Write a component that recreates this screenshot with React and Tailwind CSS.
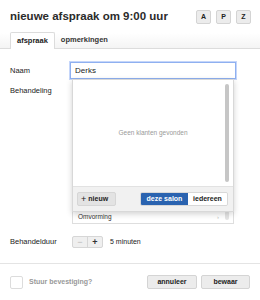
import React, { useState } from 'react';

const font = { fontFamily: '"Liberation Sans", Arial, sans-serif' };

function SmallKey({ children }) {
  return (
    <button className="w-[15px] h-[14px] rounded-[2px] border border-[#d4d4d4] bg-[#ececec] text-[7px] font-bold text-[#222] flex items-center justify-center leading-none">
      {children}
    </button>
  );
}

export default function App() {
  const [name, setName] = useState('Derks');
  const [duur, setDuur] = useState(5);
  const [scope, setScope] = useState('salon');

  return (
    <div className="w-[260px] h-[300px] bg-white text-[#222] overflow-hidden flex flex-col" style={font}>
      {/* header */}
      <div className="flex items-center justify-between pl-[10px] pr-[9px] pt-[9px] h-[24px]">
        <h1 className="text-[11.5px] font-bold leading-none text-[#2b2b2b]">nieuwe afspraak om 9:00 uur</h1>
        <div className="flex gap-[5px]">
          <SmallKey>A</SmallKey>
          <SmallKey>P</SmallKey>
          <SmallKey>Z</SmallKey>
        </div>
      </div>

      {/* tabs */}
      <div className="mt-[9px] flex items-end h-[16px] px-[10px] bg-gradient-to-b from-white to-[#f4f4f4] border-b border-[#dcdcdc]">
        <div className="h-[17px] -mb-px px-[6px] flex items-center bg-white border border-b-0 border-[#dcdcdc] rounded-t-[2px] text-[7.5px] font-bold">afspraak</div>
        <div className="h-[16px] px-[6px] flex items-center text-[7.5px] font-bold text-[#333]">opmerkingen</div>
      </div>

      {/* form */}
      <div className="flex flex-col px-[10px] pt-[13px]">
        <div className="flex items-center h-[17px]">
          <div className="w-[60px] text-[7.5px]">Naam</div>
          <div className="relative h-[17px]">
            <input
              value={name}
              onChange={e => setName(e.target.value)}
              className="block w-[166px] h-[17px] border border-[#8fb0f0] shadow-[0_0_0_1px_#c5d6fa] px-[4px] text-[8px] outline-none"
              style={font}
            />
            <div className="absolute left-[2px] top-[17px] w-[162px] h-[133px] bg-white border border-[#d8d8d8] shadow-[0_2px_6px_rgba(0,0,0,0.18)] z-10 flex flex-col">
              <div className="relative flex-1 flex items-center justify-center">
                <span className="text-[6.5px] text-[#999]">Geen klanten gevonden</span>
                <div className="absolute right-[4px] top-[4px] w-[4px] h-[98px] rounded-full bg-[#c6c6c6]"></div>
              </div>
              <div className="h-[25px] bg-[#f1f1f1] border-t border-[#e2e2e2] flex items-center justify-between pl-[4px] pr-[5px]">
                <button className="h-[14px] px-[3px] w-[39px] rounded-[2px] bg-[#e3e3e3] border border-[#d6d6d6] text-[7px] font-bold flex items-center gap-[2px]">
                  <span className="text-[9px] leading-none font-normal">+</span>nieuw
                </button>
                <div className="flex h-[14px] rounded-[2px] overflow-hidden border border-[#d8d8d8]">
                  <button
                    onClick={() => setScope('salon')}
                    className={scope === 'salon' ? 'w-[47px] bg-[#2a63b0] text-white text-[7px] font-bold' : 'w-[47px] bg-white text-[#222] text-[7px] font-bold'}
                  >
                    deze salon
                  </button>
                  <button
                    onClick={() => setScope('all')}
                    className={scope === 'all' ? 'w-[39px] bg-[#2a63b0] text-white text-[7px] font-bold' : 'w-[39px] bg-white text-[#222] text-[7px] font-bold'}
                  >
                    iedereen
                  </button>
                </div>
              </div>
            </div>
          </div>
        </div>

        <div className="flex items-start mt-[5px]">
          <div className="w-[60px] text-[7.5px] pt-[1px]">Behandeling</div>
          <div className="ml-[2px] w-[162px] h-[140px] border border-[#dedede] relative flex flex-col justify-end overflow-hidden">
            <div className="h-[12px] shrink-0 flex items-center justify-between pl-[5px] pr-[14px] text-[6.5px] text-[#333]">
              <span>Omvorming</span>
              <span className="text-[6px] text-[#bbb]">›</span>
            </div>
            <div className="absolute right-[4px] bottom-[3px] w-[4px] h-[9px] rounded-full bg-[#e4e4e4]"></div>
          </div>
        </div>

        <div className="flex items-center mt-[12px]">
          <div className="w-[62px] text-[7.5px]">Behandelduur</div>
          <div className="flex h-[12px] w-[31px] border border-[#d6d6d6] rounded-[2px] bg-[#efefef] text-[9px] leading-none">
            <button onClick={() => setDuur(Math.max(5, duur - 5))} className="flex-1 text-[#b8b8b8] border-r border-[#d6d6d6] flex items-center justify-center">−</button>
            <button onClick={() => setDuur(duur + 5)} className="flex-1 text-[#333] flex items-center justify-center font-bold">+</button>
          </div>
          <span className="ml-[7px] text-[7px]">{duur} minuten</span>
        </div>
      </div>

      <div className="mt-[15px] border-t border-[#e4e4e4]"></div>

      {/* footer */}
      <div className="flex items-center justify-between px-[10px] pt-[11px]">
        <label className="flex items-center gap-[6px]">
          <span className="w-[13px] h-[13px] border border-[#dcdcdc] rounded-[2px] bg-white"></span>
          <span className="text-[7px] font-bold text-[#999]">Stuur bevestiging?</span>
        </label>
        <div className="flex gap-[4px]">
          <button className="w-[50px] h-[14px] rounded-[2px] bg-[#ececec] border border-[#d4d4d4] text-[7px] font-bold">annuleer</button>
          <button className="w-[49px] h-[14px] rounded-[2px] bg-[#ececec] border border-[#d4d4d4] text-[7px] font-bold">bewaar</button>
        </div>
      </div>
    </div>
  );
}
